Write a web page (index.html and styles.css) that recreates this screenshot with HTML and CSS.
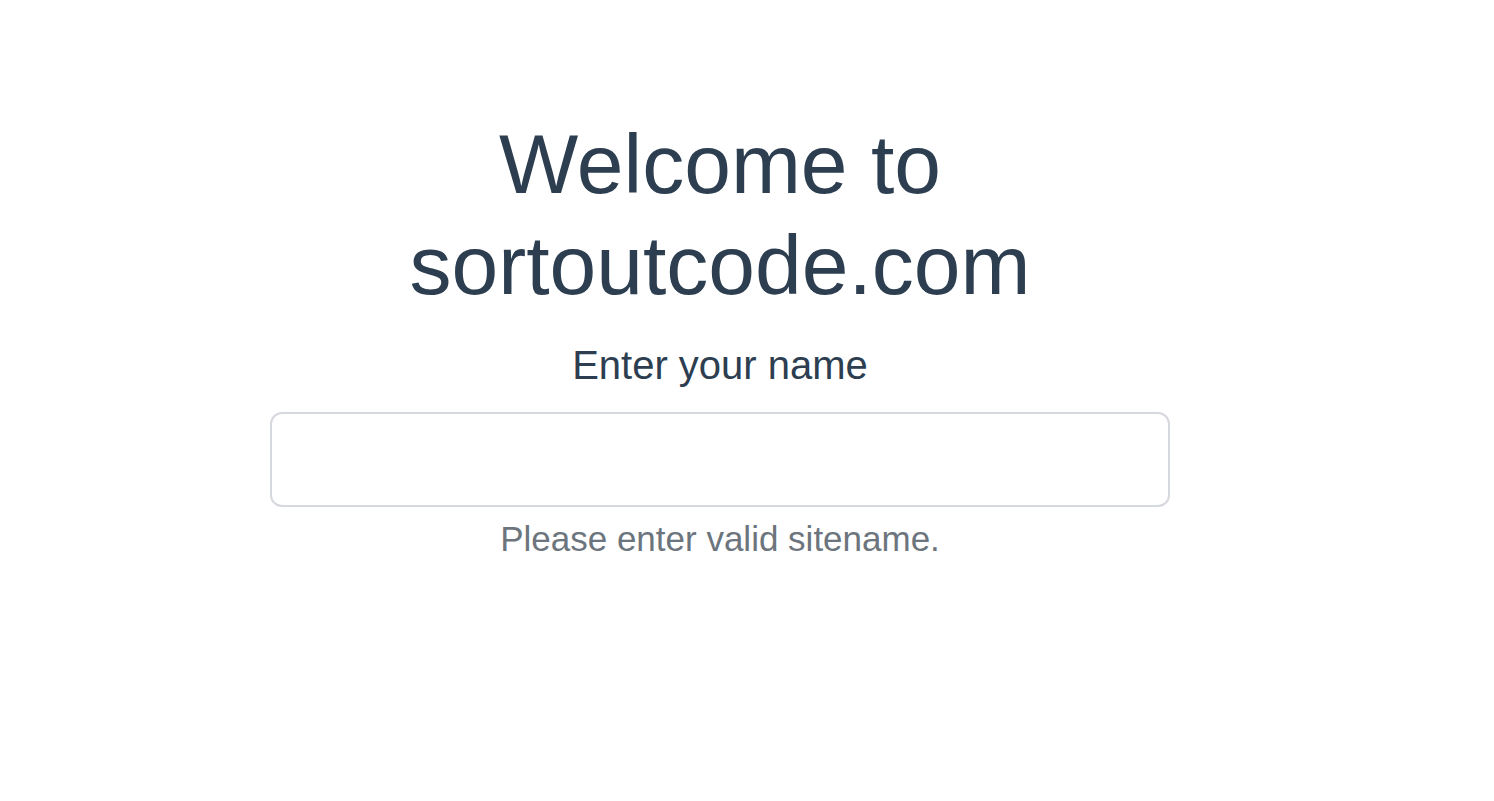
FILE: index.html
```html
<!DOCTYPE html>
<html>
<head>
<meta charset="utf-8">
<link rel="stylesheet" href="styles.css">
</head>
<body>
<div class="page">
  <div class="card">
    <h1 class="title">Welcome to<br>sortoutcode.com</h1>
    <label class="label" for="name">Enter your name</label>
    <input class="field" id="name" type="text">
    <p class="hint">Please enter valid sitename.</p>
  </div>
</div>
</body>
</html>
```

FILE: styles.css
```css
html, body {
  margin: 0;
  padding: 0;
  background: #fff;
}
.page {
  width: 1440px;
  display: flex;
  justify-content: center;
  padding-top: 114px;
  font-family: "Liberation Sans", Arial, sans-serif;
  color: #2c3e50;
}
.card {
  width: 900px;
  display: flex;
  flex-direction: column;
  align-items: center;
  text-align: center;
}
.title {
  margin: 0;
  font-size: 84px;
  font-weight: 400;
  line-height: 101px;
}
.label {
  margin-top: 26px;
  font-size: 40px;
  line-height: 46px;
}
.field {
  box-sizing: border-box;
  margin-top: 24px;
  width: 900px;
  height: 95px;
  border: 2px solid #d5d8dc;
  border-radius: 12px;
  outline: none;
  background: #fff;
}
.hint {
  margin: 12px 0 0;
  font-size: 35px;
  line-height: 40px;
  color: #6c757d;
}
```
